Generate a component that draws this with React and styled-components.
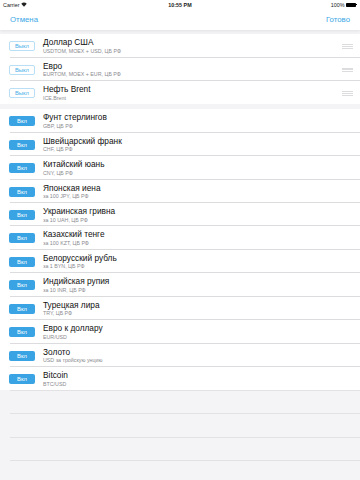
import React from "react";
import styled, { createGlobalStyle } from "styled-components";

const Global = createGlobalStyle`
  html, body { margin: 0; padding: 0; }
  body {
    font-family: "Liberation Sans", Arial, sans-serif;
    background: #f4f4f6;
    -webkit-font-smoothing: antialiased;
  }
`;

const ROW_H = 23.44;

const Screen = styled.div`
  width: 360px;
  height: 480px;
  overflow: hidden;
  background: #f4f4f6;
  display: flex;
  flex-direction: column;
`;

const Header = styled.header`
  background: #fff;
  box-shadow: 0 1px 3px rgba(0, 0, 0, 0.08);
  position: relative;
  z-index: 1;
`;

const StatusBar = styled.div`
  height: 9.4px;
  display: grid;
  grid-template-columns: 1fr auto 1fr;
  align-items: center;
  padding: 0 3px;
  font-size: 5.4px;
  color: #222;
`;

const StatusLeft = styled.div`
  display: flex;
  align-items: center;
  gap: 1.5px;
`;

const StatusTime = styled.div`
  font-weight: 700;
`;

const StatusRight = styled.div`
  display: flex;
  align-items: center;
  justify-content: flex-end;
  gap: 1.5px;
`;

const Battery = styled.div`
  width: 10px;
  height: 4px;
  background: #000;
  border-radius: 0.8px;
  position: relative;
  margin-right: 1px;
  &::after {
    content: "";
    position: absolute;
    right: -1.2px;
    top: 1.2px;
    width: 1px;
    height: 1.6px;
    background: #000;
  }
`;

const NavBar = styled.nav`
  height: 20.6px;
  display: flex;
  align-items: center;
  justify-content: space-between;
  padding: 0 10px 0 10px;
`;

const NavButton = styled.span`
  font-size: 7.8px;
  color: #3aa7e6;
`;

const Content = styled.main`
  flex: 1;
  display: flex;
  flex-direction: column;
  padding-top: 4px;
`;

const Section = styled.section`
  background: #fff;
  margin-bottom: ${(p) => p.$gap || 0}px;
`;

const Row = styled.div`
  height: ${ROW_H}px;
  display: flex;
  align-items: center;
  padding-left: 9px;
  position: relative;
  &::after {
    content: "";
    position: absolute;
    left: 10px;
    right: 0;
    bottom: 0;
    height: 0.5px;
    background: ${(p) => (p.$last ? "transparent" : "#dcdcdf")};
  }
`;

const Toggle = styled.div`
  width: 26px;
  height: 10px;
  box-sizing: border-box;
  border-radius: 2px;
  display: flex;
  align-items: center;
  justify-content: center;
  font-size: 5.8px;
  margin-top: 1.5px;
  flex-shrink: 0;
  background: ${(p) => (p.$on ? "#3aa3e3" : "#fff")};
  color: ${(p) => (p.$on ? "#fff" : "#4aaee8")};
  border: ${(p) => (p.$on ? "none" : "0.8px solid #b9def5")};
`;

const TextBlock = styled.div`
  margin-left: 8px;
  display: flex;
  flex-direction: column;
  flex: 1;
  min-width: 0;
`;

const Title = styled.div`
  font-size: 8.3px;
  line-height: 10px;
  color: #111;
`;

const Subtitle = styled.div`
  font-size: 5.3px;
  line-height: 6px;
  color: #8a8a8f;
  margin-top: 0.5px;
`;

const Grip = styled.div`
  width: 11px;
  margin-right: 7px;
  margin-top: 1.5px;
  display: flex;
  flex-direction: column;
  gap: 1.1px;
  span {
    display: block;
    height: 0.8px;
    background: #dcdcdf;
  }
`;

const EmptyRow = styled.div`
  height: ${ROW_H}px;
  flex-shrink: 0;
  margin-left: 10px;
  border-top: 0.6px solid #e2e2e5;
  box-sizing: border-box;
`;

const disabled = [
  { t: "Доллар США", s: "USDTOM, MOEX + USD, ЦБ РФ" },
  { t: "Евро", s: "EURTOM, MOEX + EUR, ЦБ РФ" },
  { t: "Нефть Brent", s: "ICE.Brent" },
];

const enabled = [
  { t: "Фунт стерлингов", s: "GBP, ЦБ РФ" },
  { t: "Швейцарский франк", s: "CHF, ЦБ РФ" },
  { t: "Китайский юань", s: "CNY, ЦБ РФ" },
  { t: "Японская иена", s: "за 100 JPY, ЦБ РФ" },
  { t: "Украинская гривна", s: "за 10 UAH, ЦБ РФ" },
  { t: "Казахский тенге", s: "за 100 KZT, ЦБ РФ" },
  { t: "Белорусский рубль", s: "за 1 BYN, ЦБ РФ" },
  { t: "Индийская рупия", s: "за 10 INR, ЦБ РФ" },
  { t: "Турецкая лира", s: "TRY, ЦБ РФ" },
  { t: "Евро к доллару", s: "EUR/USD" },
  { t: "Золото", s: "USD за тройскую унцию" },
  { t: "Bitcoin", s: "BTC/USD" },
];

const Wifi = () => (
  <svg width="6" height="5" viewBox="0 0 12 9">
    <path d="M6 9 L0.5 3.2 A8 8 0 0 1 11.5 3.2 Z" fill="#222" />
  </svg>
);

export default function App() {
  return (
    <Screen>
      <Global />
      <Header>
        <StatusBar>
          <StatusLeft>
            Carrier <Wifi />
          </StatusLeft>
          <StatusTime>10:55 PM</StatusTime>
          <StatusRight>
            100% <Battery />
          </StatusRight>
        </StatusBar>
        <NavBar>
          <NavButton>Отмена</NavButton>
          <NavButton>Готово</NavButton>
        </NavBar>
      </Header>
      <Content>
        <Section $gap={4.5}>
          {disabled.map((r, i) => (
            <Row key={r.t} $last={i === disabled.length - 1}>
              <Toggle>Выкл</Toggle>
              <TextBlock>
                <Title>{r.t}</Title>
                <Subtitle>{r.s}</Subtitle>
              </TextBlock>
              <Grip>
                <span />
                <span />
                <span />
              </Grip>
            </Row>
          ))}
        </Section>
        <Section>
          {enabled.map((r, i) => (
            <Row key={r.t} $last={i === enabled.length - 1}>
              <Toggle $on>Вкл</Toggle>
              <TextBlock>
                <Title>{r.t}</Title>
                <Subtitle>{r.s}</Subtitle>
              </TextBlock>
            </Row>
          ))}
        </Section>
        <EmptyRow />
        <EmptyRow />
        <EmptyRow />
        <EmptyRow />
      </Content>
    </Screen>
  );
}
